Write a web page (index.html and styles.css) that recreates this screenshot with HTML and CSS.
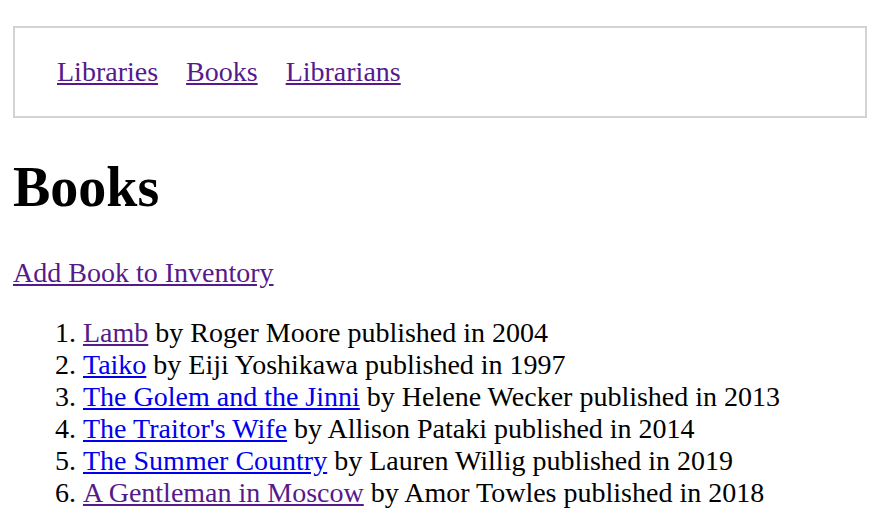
FILE: index.html
```html
<!DOCTYPE html>
<html>
<head>
<meta charset="utf-8">
<title>Books</title>
<link rel="stylesheet" href="styles.css">
</head>
<body class="page">
<nav class="nav">
  <a class="link visited" href="#">Libraries</a>
  <a class="link visited" href="#">Books</a>
  <a class="link visited" href="#">Librarians</a>
</nav>
<h1 class="title">Books</h1>
<p class="add"><a class="link visited" href="#">Add Book to Inventory</a></p>
<ol class="books">
  <li><a class="link visited" href="#">Lamb</a> by Roger Moore published in 2004</li>
  <li><a class="link fresh" href="#">Taiko</a> by Eiji Yoshikawa published in 1997</li>
  <li><a class="link fresh" href="#">The Golem and the Jinni</a> by Helene Wecker published in 2013</li>
  <li><a class="link fresh" href="#">The Traitor's Wife</a> by Allison Pataki published in 2014</li>
  <li><a class="link fresh" href="#">The Summer Country</a> by Lauren Willig published in 2019</li>
  <li><a class="link visited" href="#">A Gentleman in Moscow</a> by Amor Towles published in 2018</li>
</ol>
</body>
</html>
```
FILE: styles.css
```css
html, body {
  background: #fff;
}
.page {
  margin: 0;
  padding: 26px 13px 0;
  font-family: "Liberation Serif", "Times New Roman", serif;
  font-size: 28px;
  line-height: 32px;
  color: #000;
}
.nav {
  display: flex;
  gap: 28px;
  border: 2px solid #d3d3d3;
  padding: 28px 42px 28px;
}
.link {
  text-decoration: underline;
}
.visited {
  color: #551a8b;
}
.fresh {
  color: #0000ee;
}
.title {
  font-size: 56px;
  line-height: 64px;
  font-weight: bold;
  margin: 37px 0 38px;
}
.add {
  margin: 0 0 28px;
}
.books {
  margin: 0;
  padding-left: 70px;
  list-style: decimal outside;
}
```
